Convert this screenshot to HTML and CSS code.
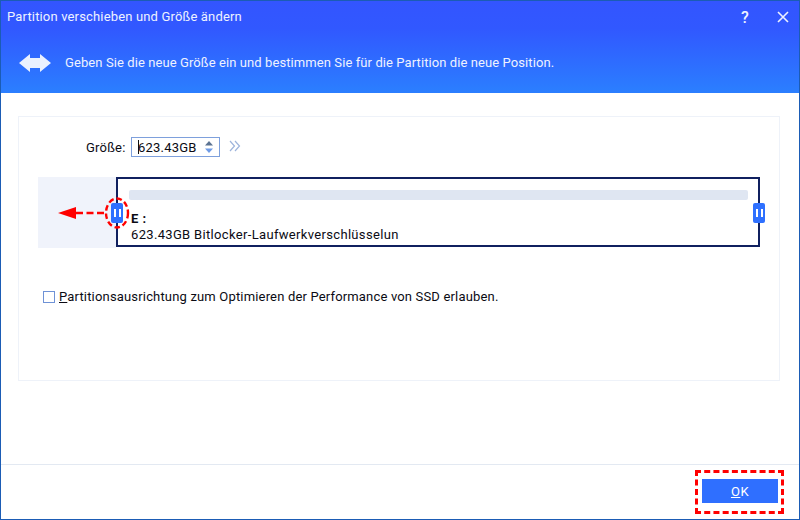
FILE: index.html
```html
<!DOCTYPE html>
<html lang="de">
<head>
<meta charset="utf-8">
<title>Partition verschieben und Größe ändern</title>
<link rel="stylesheet" href="styles.css">
</head>
<body>
<div class="window">
  <header class="head">
    <div class="titlebar">
      <span class="title">Partition verschieben und Größe ändern</span>
      <span class="help">?</span>
      <svg class="close" width="12" height="12" viewBox="0 0 12 12"><path d="M1 1L11 11M11 1L1 11" stroke="#eef2ff" stroke-width="1.6" fill="none"/></svg>
    </div>
    <div class="banner">
      <svg class="arrows" width="32" height="18" viewBox="0 0 32 18"><path d="M0 9L11 0V4H21V0L32 9L21 18V14H11V18Z" fill="#eaf1ff"/></svg>
      <span class="subtitle">Geben Sie die neue Größe ein und bestimmen Sie für die Partition die neue Position.</span>
    </div>
  </header>
  <main class="main">
    <section class="panel">
      <div class="size-row">
        <label class="size-label">Größe:</label>
        <div class="spin">
          <span class="caret"></span><span class="spin-val">623.43GB</span>
          <svg class="spin-arrows" width="10" height="14" viewBox="0 0 10 14"><path d="M5 1L9 5.5H1Z" fill="#5b7392"/><path d="M5 13L9 8.5H1Z" fill="#6f9be6"/></svg>
        </div>
        <svg class="chev" width="12" height="12" viewBox="0 0 12 12"><path d="M1 1L5.5 6L1 11M6 1L10.5 6L6 11" stroke="#9db4dc" stroke-width="1.2" fill="none"/></svg>
      </div>
      <div class="track">
        <div class="free"></div>
        <div class="part">
          <div class="bar"></div>
          <div class="drive">E :</div>
          <div class="desc">623.43GB Bitlocker-Laufwerkverschlüsselun</div>
          <span class="grip grip-left"><i></i><i></i></span>
          <span class="grip grip-right"><i></i><i></i></span>
        </div>
        <svg class="mark" width="90" height="36" viewBox="0 0 90 36">
          <ellipse cx="62" cy="18" rx="11" ry="14.5" fill="none" stroke="#f00" stroke-width="2.4" stroke-dasharray="5.5 3"/>
          <path d="M3 18L21 12V24Z" fill="#f00"/>
          <path d="M21 18H51" stroke="#f00" stroke-width="2.4" stroke-dasharray="7 3.5" fill="none"/>
        </svg>
      </div>
      <label class="check-row">
        <span class="check"></span>
        <span class="check-text"><u>P</u>artitionsausrichtung zum Optimieren der Performance von SSD erlauben.</span>
      </label>
    </section>
  </main>
  <footer class="foot">
    <div class="ok-frame"><button class="ok"><u>O</u>K</button></div>
  </footer>
</div>
</body>
</html>
```
FILE: styles.css
```css
* { box-sizing: border-box; }
html, body { margin: 0; padding: 0; }
body { width: 800px; height: 520px; overflow: hidden; background: #fff; font-family: Roboto, "Liberation Sans", sans-serif; font-size: 13px; color: #0b0b14; }
.window { width: 800px; height: 520px; display: flex; flex-direction: column; border: 1px solid #1b5cb5; }
.head { height: 92px; flex: none; background: linear-gradient(#3355ff 0%, #3158ff 30%, #2b7fff 100%); color: #eef2ff; display: flex; flex-direction: column; }
.titlebar { height: 30px; display: flex; align-items: center; padding: 2px 10px 0 6px; }
.title { flex: 1; letter-spacing: .16px; margin-top: -2px; }
.help { font-size: 16px; font-weight: 500; width: 16px; text-align: center; margin-right: 24px; }
.close { display: block; }
.banner { flex: 1; display: flex; align-items: center; padding: 2px 0 1px 18px; gap: 14px; }
.subtitle { letter-spacing: .09px; }
.main { flex: 1; padding: 23px 19px 0 17px; }
.panel { height: 265px; border: 1px solid #eef2f9; padding: 20px 19px 0 19px; }
.size-row { display: flex; align-items: center; height: 20px; padding-left: 48px; }
.size-label { width: 45px; letter-spacing: .2px; }
.spin { width: 89px; height: 20px; border: 1px solid #7ea0dc; display: flex; align-items: center; padding-left: 6px; letter-spacing: .2px; }
.caret { width: 1px; height: 14px; background: #111; margin-right: -1px; }
.spin-val { flex: 1; }
.spin-arrows { margin-right: 5px; }
.chev { margin-left: 9px; margin-top: -3px; }
.track { position: relative; height: 71px; margin-top: 20px; background: linear-gradient(90deg, #f0f3fb 78px, transparent 78px); display: flex; align-items: flex-start; }
.free { width: 78px; flex: none; }
.part { position: relative; width: 644px; height: 70px; border: 2px solid #10205f; padding: 11px 10px 0 11px; background: #fff; }
.bar { height: 10px; background: #dfe6f2; border-radius: 2px; }
.drive { margin: 12px 0 0 2px; font-weight: 700; letter-spacing: .5px; line-height: 14px; }
.desc { margin: 2px 0 0 2px; line-height: 14px; letter-spacing: .33px; }
.grip { position: absolute; top: 24px; width: 12px; height: 20px; background: #2e70ff; border-radius: 2px; display: flex; align-items: center; justify-content: center; gap: 3px; }
.grip i { width: 2px; height: 8px; background: #fff; display: block; }
.grip-left { left: -7px; }
.grip-right { right: -7px; }
.mark { position: absolute; left: 17px; top: 18px; }
.check-row { display: flex; align-items: center; margin-top: 40px; height: 18px; padding-left: 5px; }
.check { width: 12px; height: 12px; border: 1px solid #6f92d6; margin-right: 4px; flex: none; }
.check-text { letter-spacing: .17px; margin-top: -2px; }
.foot { height: 55px; flex: none; border-top: 1px solid #e3e9f2; display: flex; justify-content: flex-end; align-items: flex-start; padding: 5px 15px 0 0; }
.ok-frame { width: 89px; height: 44px; border: 3px dashed #f00; display: flex; align-items: flex-start; justify-content: flex-start; padding: 6px 0 0 4px; }
.ok { width: 76px; height: 24px; border: 0; padding: 0; background: #2f6fff; color: #fff; font: inherit; letter-spacing: .5px; }
```
